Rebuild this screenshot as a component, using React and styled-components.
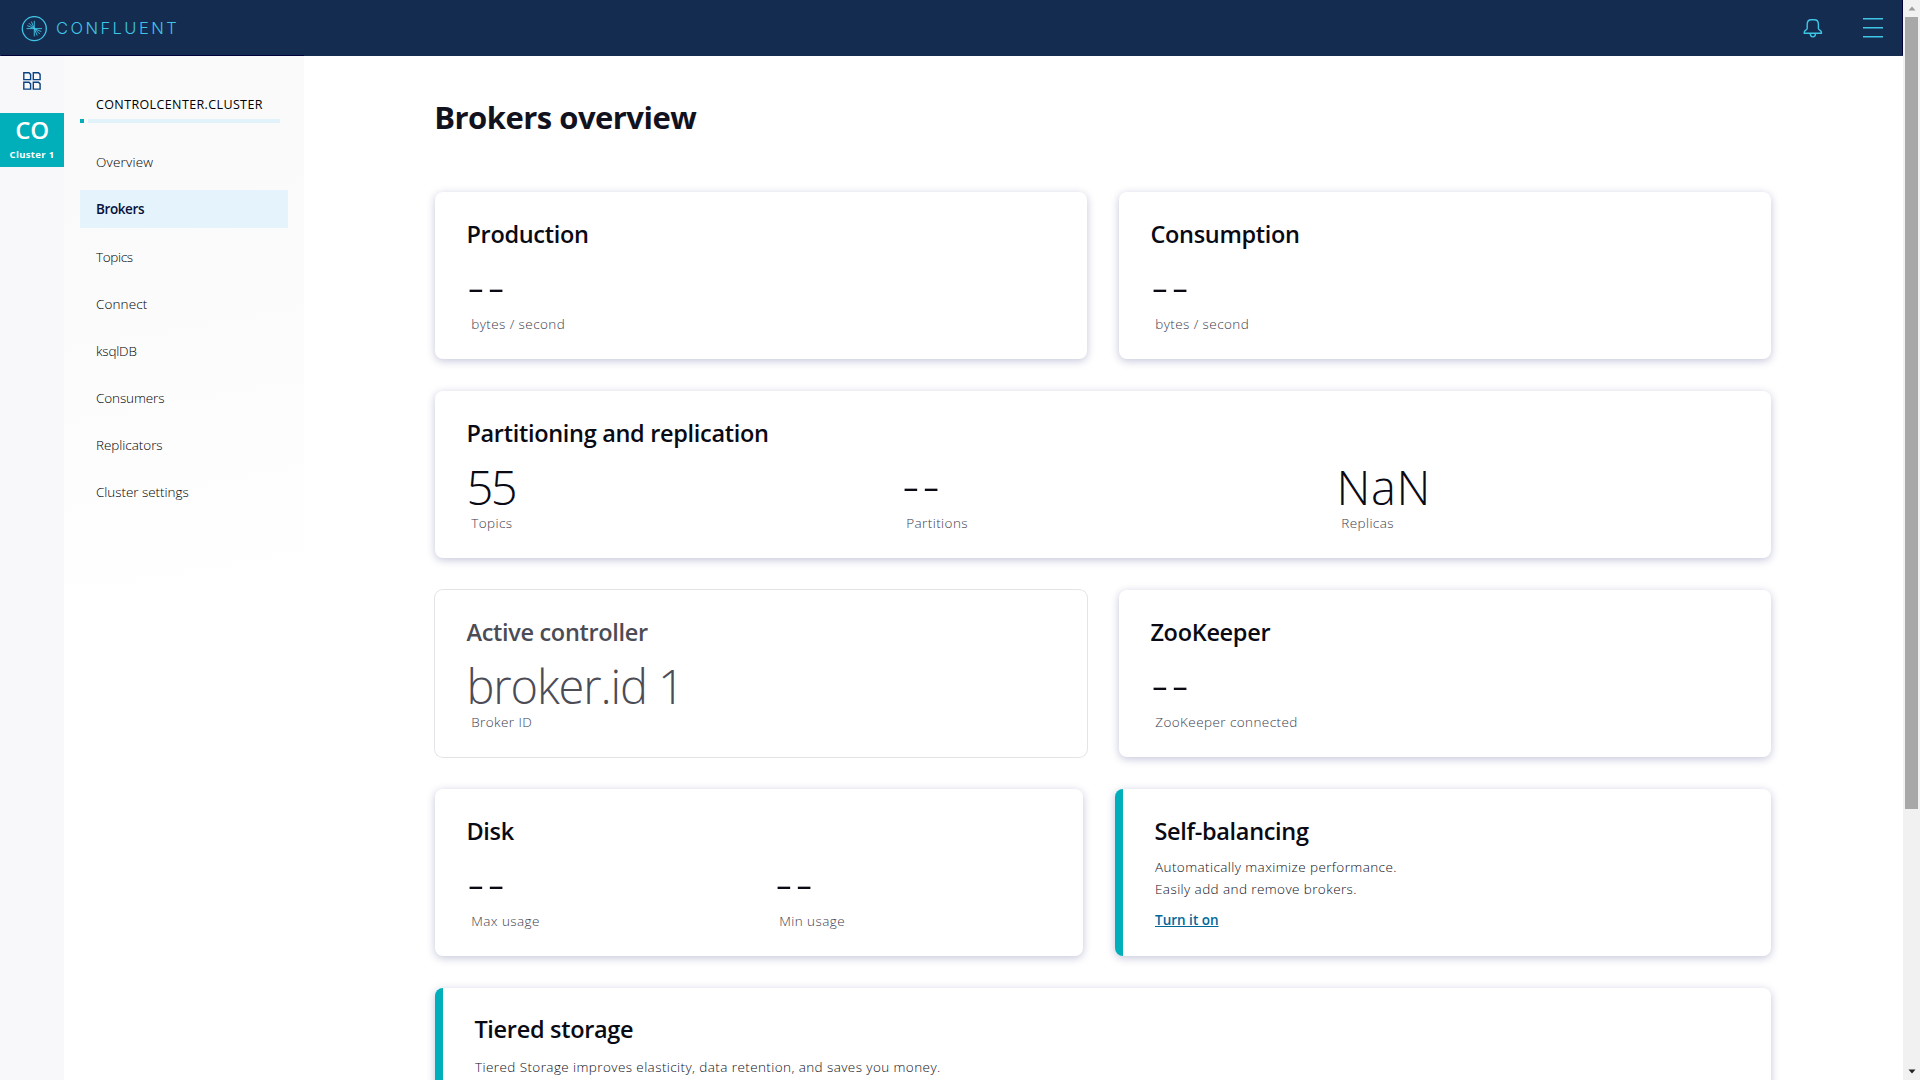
import React from "react";
import styled, { createGlobalStyle, css } from "styled-components";

const GlobalStyle = createGlobalStyle`
  * { box-sizing: border-box; }
  html, body { margin: 0; height: 100%; overflow: hidden; background: #fff; }
  body { font-family: "Open Sans", "Noto Sans", sans-serif; color: #0a0a14; }
  h1, h2, p { margin: 0; }
`;

const Window = styled.div`
  display: flex;
  height: 1080px;
  overflow: hidden;
`;

const Page = styled.div`
  flex: 1;
  display: flex;
  flex-direction: column;
  min-width: 0;
`;

const Header = styled.header`
  flex: none;
  height: 56px;
  display: flex;
  align-items: flex-start;
  justify-content: space-between;
  padding: 16px 20px 0 21px;
  background:
    linear-gradient(#00003c, #00003c) 1px 55px / 303px 1px no-repeat,
    linear-gradient(#00003c, #00003c) right top / 1px 55px no-repeat,
    #152c51;
`;

const Brand = styled.div`
  display: flex;
  align-items: center;
  gap: 9px;
  height: 26px;
  color: #3fc6e6;
`;

const BrandName = styled.span`
  font: 300 16.5px/24px Inter, sans-serif;
  letter-spacing: 2.45px;
  margin-bottom: 2px;
`;

const Actions = styled.div`
  display: flex;
  gap: 40px;
`;

const Body = styled.div`
  flex: 1;
  display: flex;
  min-height: 0;
`;

const Rail = styled.aside`
  flex: none;
  width: 64px;
  background: #f8f8fb;
  display: flex;
  flex-direction: column;
  align-items: center;
  padding-top: 16px;
`;

const ClusterTile = styled.div`
  width: 64px;
  height: 54px;
  margin-top: 23px;
  background: #00afba;
  color: #fff;
  display: flex;
  flex-direction: column;
  align-items: center;
`;

const ClusterInitials = styled.div`
  font-size: 24px;
  line-height: 34px;
  font-weight: 600;
  letter-spacing: -0.4px;
`;

const ClusterName = styled.div`
  font-size: 9.5px;
  line-height: 16px;
  font-weight: 700;
  letter-spacing: 0.35px;
`;

const Sidebar = styled.nav`
  flex: none;
  width: 240px;
  height: 528px;
  padding: 39px 16px 0;
  background: linear-gradient(170deg, #fafafb 20%, #fcfcfd 60%, #ffffff 100%);
`;

const ClusterId = styled.div`
  padding-left: 16px;
  font-size: 12.5px;
  line-height: 20px;
  letter-spacing: 0.38px;
  color: #000;
`;

const Progress = styled.div`
  display: flex;
  gap: 4px;
  height: 4px;
  margin: 4px 0 20.4px;
`;

const ProgressPart = styled.span`
  width: ${(p) => p.$width}px;
  background: ${(p) => p.$color};
`;

const NavList = styled.div`
  display: flex;
  flex-direction: column;
  gap: 9.1px;
`;

const NavItem = styled.a`
  height: 38px;
  padding-left: 16px;
  width: 208px;
  font-size: 13.5px;
  line-height: 39px;
  font-weight: ${(p) => (p.$active ? 600 : 300)};
  letter-spacing: ${(p) => p.$spacing}px;
  color: ${(p) => (p.$active ? "#06123c" : "#000")};
  background: ${(p) => (p.$active ? "#e5f4fc" : "transparent")};
`;

const Main = styled.main`
  flex: 1;
  padding: 37px 132px 0 131px;
  min-width: 0;
  overflow: hidden;
`;

const Title = styled.h1`
  font-size: 31px;
  line-height: 48px;
  font-weight: 700;
  letter-spacing: -0.52px;
  color: #12121e;
  margin: 0 0 51px -0.8px;
`;

const Rows = styled.div`
  display: flex;
  flex-direction: column;
  gap: 32px;
`;

const CardRow = styled.div`
  display: grid;
  grid-template-columns: ${(p) => p.$columns};
  column-gap: 32px;
`;

const Card = styled.section`
  height: 167px;
  padding: ${(p) => p.$top || 26}px 32px 0;
  border-radius: 8px;
  background: #fff;
  box-shadow: 0 2px 8px rgba(24, 32, 110, 0.26);
  ${(p) => p.$accent && css`border-left: 8px solid #00afba;`}
  ${(p) => p.$muted && css`
    box-shadow: 0 0 0 1px #e3e4e8;
    color: #4c4c56;
  `}
`;

const CardTitle = styled.h2`
  margin-left: -0.6px;
  font-size: 23.5px;
  line-height: 32px;
  font-weight: 600;
  letter-spacing: -0.31px;
`;

const Metrics = styled.div`
  display: grid;
  grid-template-columns: ${(p) => p.$columns};
  margin-top: 13px;
`;

const Metric = styled.div`
  display: flex;
  flex-direction: column;
  gap: 3px;
`;

const Value = styled.div`
  height: 48px;
  font-size: 47px;
  line-height: 51px;
  margin-left: -0.6px;
  font-weight: 300;
  letter-spacing: ${(p) => p.$spacing}px;
  ${(p) => p.$empty && css`
    font-size: 52px;
    line-height: 44px;
    margin-left: 0.6px;
    letter-spacing: 3.3px;
  `}
`;

const Label = styled.div`
  padding-left: 4.2px;
  font-size: 13.5px;
  line-height: 20px;
  font-weight: 300;
  letter-spacing: 0.42px;
  color: #3c3c4c;
`;

const Copy = styled.p`
  margin-top: ${(p) => p.$gap}px;
  font-size: 13.5px;
  line-height: 22px;
  font-weight: 300;
  letter-spacing: 0.41px;
  color: #10101a;
`;

const ActionLink = styled.a`
  display: inline-block;
  margin-top: 9px;
  font-size: 13.5px;
  line-height: 22px;
  font-weight: 600;
  color: #006899;
  text-decoration: underline;
  text-underline-offset: 1px;
`;

const Scrollbar = styled.div`
  flex: none;
  width: 17px;
  background: #f1f1f1;
  display: flex;
  flex-direction: column;
  align-items: center;
`;

const ScrollButton = styled.div`
  height: 17px;
  display: flex;
  align-items: center;
`;

const ScrollThumb = styled.div`
  width: 13px;
  height: 792px;
  margin-bottom: auto;
  background: #a8a8a8;
`;

const LogoMark = () => (
  <svg width="26" height="26" viewBox="0 0 26 26" fill="none" stroke="currentColor" strokeWidth="1">
    <circle cx="13.3" cy="12.6" r="12" strokeWidth="1.3" />
    <path d="M13.3 4.8V20.4M5.5 12.6H21.1" strokeWidth="0.9" />
    <path d="M13.3 12.6L10.4 5.6M13.3 12.6L7.8 7.1M13.3 12.6L6.2 9.6M13.3 12.6L16.2 19.6M13.3 12.6L18.8 18.1M13.3 12.6L20.4 15.6" strokeWidth="0.9" />
  </svg>
);

const BellIcon = () => (
  <svg width="20" height="22" viewBox="0 0 20 22" fill="none" stroke="#3fc6e6" strokeWidth="1.4">
    <path d="M4.2 9.5V8.3C4.2 5.2 6.2 3.7 8.3 3.7H11.3C13.6 3.7 15.4 5.4 15.4 8.3V12.6C15.4 14.2 18.4 14.2 18.4 16.2V17.3H1.3V16.2C1.3 14.2 4.2 14.2 4.2 12.6Z" />
    <path d="M7.3 17.6C7.3 22 12.5 22 12.5 17.6" />
  </svg>
);

const MenuIcon = () => (
  <svg width="20" height="22" viewBox="0 0 20 22" fill="none" stroke="#3fc6e6" strokeWidth="1.4">
    <path d="M0 2.7H20M0 11.7H20M0 20.8H20" />
  </svg>
);

const GridIcon = () => (
  <svg width="18" height="18" viewBox="0 0 18 18" fill="none" stroke="#0b4380" strokeWidth="1.4">
    {[[0.8, 0.8], [10.3, 0.8], [0.8, 10.3], [10.3, 10.3]].map(([x, y]) => (
      <path key={`${x}-${y}`} d={`M${x} ${y}h5.2l1.6 1.6v5.2h-6.8z`} />
    ))}
  </svg>
);

const Arrow = ({ down, color }) => (
  <svg width="8" height="5" viewBox="0 0 8 5">
    <path d={down ? "M0.5 0.5H7.5L4 4.5Z" : "M0.5 4.5H7.5L4 0.5Z"} fill={color} />
  </svg>
);

const navItems = [
  { name: "Overview", spacing: 0.2 },
  { name: "Brokers", spacing: -0.4, active: true },
  { name: "Topics", spacing: -0.35 },
  { name: "Connect", spacing: 0.1 },
  { name: "ksqlDB", spacing: -0.2 },
  { name: "Consumers", spacing: -0.12 },
  { name: "Replicators", spacing: -0.05 },
  { name: "Cluster settings", spacing: -0.05 },
];

const Stat = ({ value, label, spacing = 0 }) => (
  <Metric>
    <Value $empty={!value} $spacing={spacing}>{value || "--"}</Value>
    <Label>{label}</Label>
  </Metric>
);

export default function App() {
  return (
    <Window>
      <GlobalStyle />
      <Page>
        <Header>
          <Brand><LogoMark /><BrandName>CONFLUENT</BrandName></Brand>
          <Actions><BellIcon /><MenuIcon /></Actions>
        </Header>
        <Body>
          <Rail>
            <GridIcon />
            <ClusterTile>
              <ClusterInitials>CO</ClusterInitials>
              <ClusterName>Cluster 1</ClusterName>
            </ClusterTile>
          </Rail>
          <Sidebar>
            <ClusterId>CONTROLCENTER.CLUSTER</ClusterId>
            <Progress>
              <ProgressPart $width={4} $color="#00afba" />
              <ProgressPart $width={192} $color="#e2f2fb" />
            </Progress>
            <NavList>
              {navItems.map((n) => (
                <NavItem key={n.name} $active={n.active} $spacing={n.spacing}>{n.name}</NavItem>
              ))}
            </NavList>
          </Sidebar>
          <Main>
            <Title>Brokers overview</Title>
            <Rows>
              <CardRow $columns="1fr 1fr">
                <Card>
                  <CardTitle>Production</CardTitle>
                  <Metrics $columns="1fr"><Stat label="bytes / second" /></Metrics>
                </Card>
                <Card>
                  <CardTitle>Consumption</CardTitle>
                  <Metrics $columns="1fr"><Stat label="bytes / second" /></Metrics>
                </Card>
              </CardRow>
              <Card>
                <CardTitle>Partitioning and replication</CardTitle>
                <Metrics $columns="435px 435px 1fr">
                  <Stat value="55" label="Topics" spacing={-2.4} />
                  <Stat label="Partitions" />
                  <Stat value="NaN" label="Replicas" spacing={0.6} />
                </Metrics>
              </Card>
              <CardRow $columns="1fr 1fr">
                <Card $muted>
                  <CardTitle>Active controller</CardTitle>
                  <Metrics $columns="1fr"><Stat value="broker.id 1" label="Broker ID" spacing={-1.1} /></Metrics>
                </Card>
                <Card>
                  <CardTitle>ZooKeeper</CardTitle>
                  <Metrics $columns="1fr"><Stat label="ZooKeeper connected" /></Metrics>
                </Card>
              </CardRow>
              <CardRow $columns="648px 656px">
                <Card>
                  <CardTitle>Disk</CardTitle>
                  <Metrics $columns="308px 1fr">
                    <Stat label="Max usage" />
                    <Stat label="Min usage" />
                  </Metrics>
                </Card>
                <Card $accent>
                  <CardTitle>Self-balancing</CardTitle>
                  <Copy $gap={9}>Automatically maximize performance.<br />Easily add and remove brokers.</Copy>
                  <ActionLink>Turn it on</ActionLink>
                </Card>
              </CardRow>
              <Card $accent $top={25}>
                <CardTitle>Tiered storage</CardTitle>
                <Copy $gap={11}>Tiered Storage improves elasticity, data retention, and saves you money.</Copy>
              </Card>
            </Rows>
          </Main>
        </Body>
      </Page>
      <Scrollbar>
        <ScrollButton><Arrow color="#9d9d9d" /></ScrollButton>
        <ScrollThumb />
        <ScrollButton><Arrow down color="#222" /></ScrollButton>
      </Scrollbar>
    </Window>
  );
}
